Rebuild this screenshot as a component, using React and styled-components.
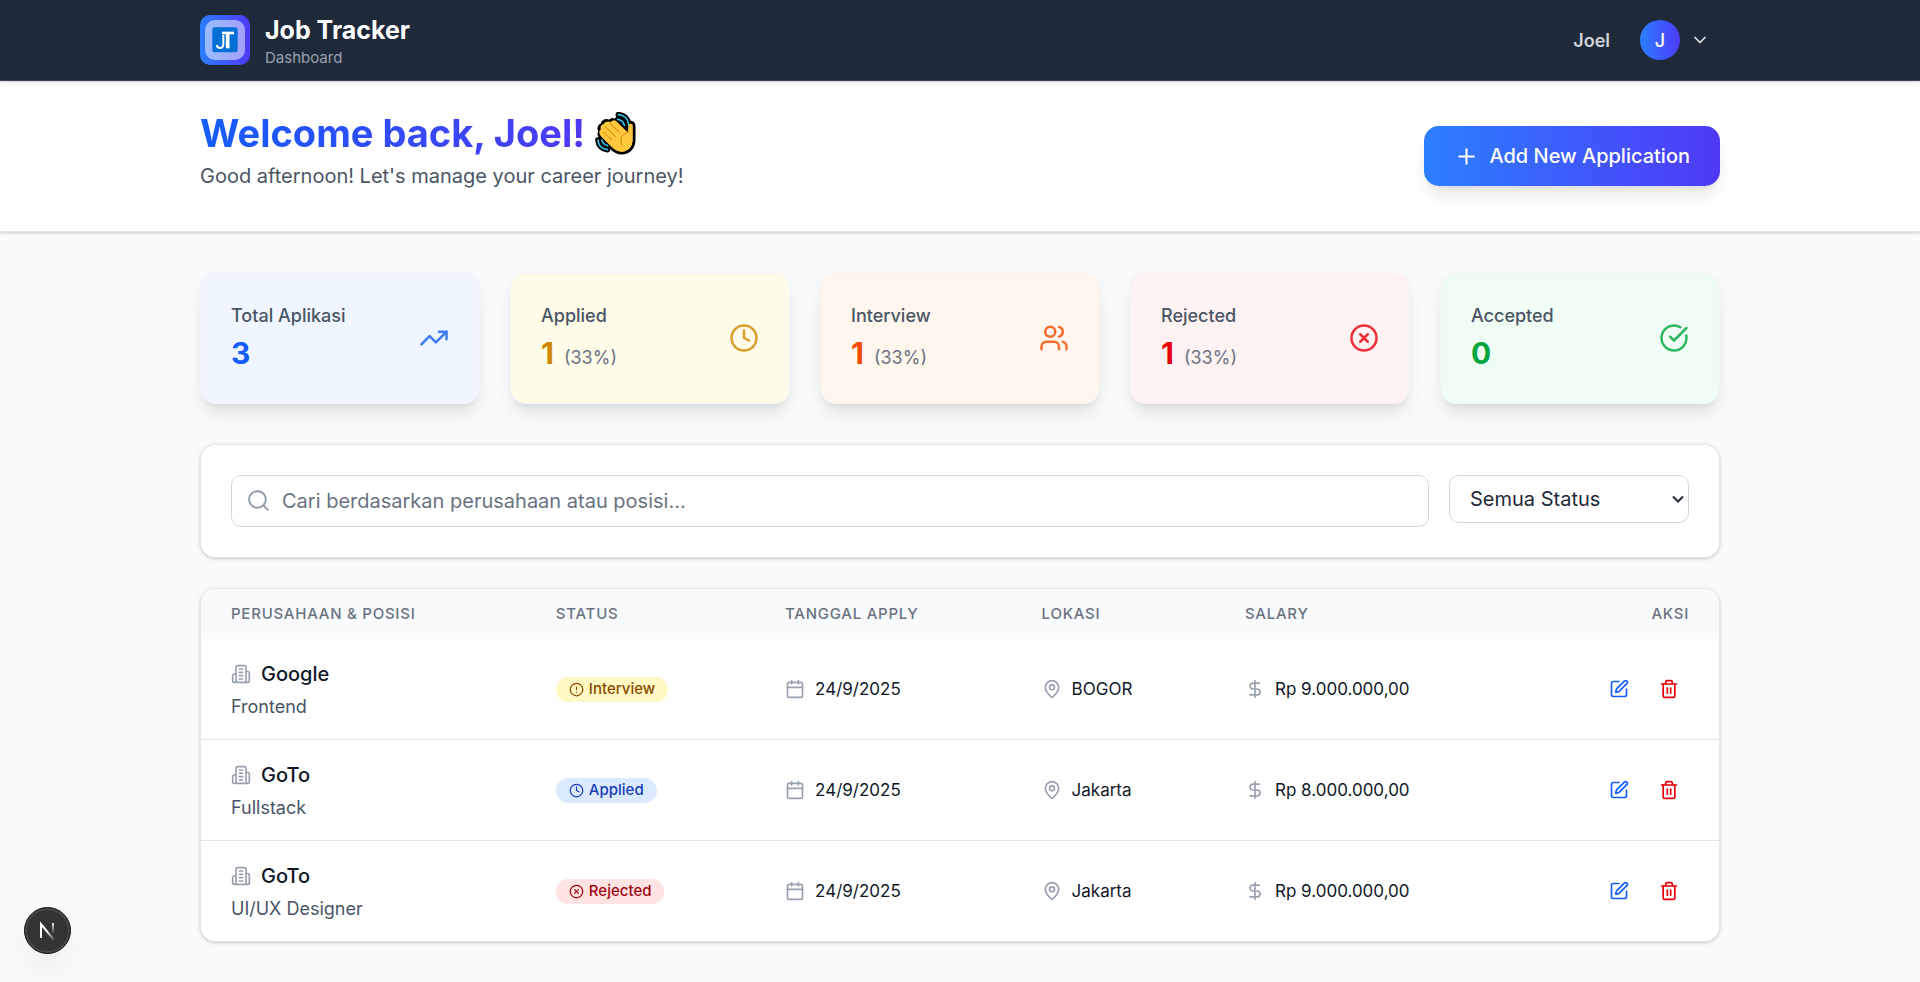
import React, { useState } from "react";
import styled, { createGlobalStyle } from "styled-components";
import {
  Calendar,
  ChevronDown,
  CircleAlert,
  CircleCheckBig,
  CircleX,
  Clock,
  DollarSign,
  MapPin,
  Plus,
  Search,
  SquarePen,
  Trash2,
  TrendingUp,
  Users,
} from "lucide-react";

const GlobalStyle = createGlobalStyle`
  *, *::before, *::after { box-sizing: border-box; }
  body {
    margin: 0;
    background: #f9fafb;
    color: #101828;
    font-family: Inter, "Liberation Sans", sans-serif;
    font-size: 20px;
    line-height: 30px;
  }
  h1, h2, p { margin: 0; }
  button, input, select { font: inherit; }
  button { cursor: pointer; }
  svg { flex-shrink: 0; display: block; }
`;

const Page = styled.div`
  min-height: 100vh;
`;

const Container = styled.div`
  width: 100%;
  max-width: 1600px;
  margin: 0 auto;
  padding: 0 40px;
`;

const Nav = styled.nav`
  position: relative;
  background: #1e2939;
  border-bottom: 1px solid #364153;
  box-shadow: 0 1px 4px rgba(0, 0, 0, 0.1), 0 1px 2px rgba(0, 0, 0, 0.1);
`;

const NavRow = styled(Container)`
  display: flex;
  align-items: center;
  justify-content: space-between;
  height: 80px;
`;

const Brand = styled.a`
  display: flex;
  align-items: center;
  gap: 15px;
  color: #ffffff;
  text-decoration: none;
`;

const LogoTile = styled.span`
  display: grid;
  place-items: center;
  width: 50px;
  height: 50px;
  border-radius: 10px;
  background: linear-gradient(90deg, #2b7fff, #4f39f6);
`;

const LogoInner = styled.span`
  display: grid;
  place-items: center;
  width: 40px;
  height: 40px;
  border-radius: 10px;
  background: rgba(255, 255, 255, 0.5);
`;

const BrandText = styled.span`
  display: flex;
  flex-direction: column;
`;

const BrandName = styled.span`
  font-size: 25px;
  font-weight: 700;
  line-height: 35px;
`;

const BrandSub = styled.span`
  color: #99a1af;
  font-size: 15px;
  line-height: 20px;
`;

const UserArea = styled.div`
  display: flex;
  align-items: center;
  gap: 20px;
`;

const UserName = styled.span`
  color: #d1d5dc;
  font-size: 18px;
  font-weight: 600;
  line-height: 25px;
`;

const UserMenuButton = styled.button`
  display: flex;
  align-items: center;
  gap: 10px;
  padding: 10px;
  border: 0;
  background: none;
  color: #e5e7eb;
`;

const Avatar = styled.span`
  display: grid;
  place-items: center;
  width: 40px;
  height: 40px;
  border-radius: 50%;
  background: linear-gradient(90deg, #2b7fff, #4f39f6);
  color: #ffffff;
  font-size: 18px;
  font-weight: 500;
  line-height: 25px;
`;

const Hero = styled.header`
  background: #ffffff;
  border-bottom: 1px solid #e5e7eb;
  box-shadow: 0 1px 4px rgba(0, 0, 0, 0.1), 0 1px 2px rgba(0, 0, 0, 0.1);
`;

const HeroRow = styled(Container)`
  display: flex;
  align-items: center;
  justify-content: space-between;
  padding-top: 30px;
  padding-bottom: 30px;
`;

const HeroText = styled.div`
  padding-bottom: 10px;
`;

const Title = styled.h1`
  display: flex;
  align-items: center;
  gap: 10px;
  font-size: 38px;
  font-weight: 700;
  line-height: 45px;
`;

const GradientText = styled.span`
  background: linear-gradient(90deg, #155dfc, #4f39f6);
  background-clip: text;
  color: transparent;
`;

const Greeting = styled.p`
  margin-top: 5px;
  color: #4a5565;
`;

const AddButton = styled.button`
  display: flex;
  align-items: center;
  gap: 10px;
  padding: 15px 30px;
  border: 0;
  border-radius: 15px;
  background: linear-gradient(90deg, #2b7fff, #4f39f6);
  box-shadow: 0 12px 19px -4px rgba(0, 0, 0, 0.1), 0 5px 8px -5px rgba(0, 0, 0, 0.1);
  color: #ffffff;
  font-weight: 500;
`;

const Main = styled.main`
  padding: 40px 0;
`;

const StatGrid = styled.section`
  display: grid;
  grid-template-columns: repeat(5, 1fr);
  gap: 30px;
  margin-bottom: 40px;
`;

const StatCard = styled.article`
  display: flex;
  align-items: center;
  justify-content: space-between;
  padding: 30px;
  border: 1px solid #f3f4f6;
  border-radius: 15px;
  background: ${(p) => p.$bg};
  color: ${(p) => p.$color};
  box-shadow: 0 12px 19px -4px rgba(0, 0, 0, 0.1), 0 5px 8px -5px rgba(0, 0, 0, 0.1);

  > svg { opacity: 0.8; }
`;

const StatLabel = styled.h2`
  color: #4a5565;
  font-size: 18px;
  font-weight: 500;
  line-height: 25px;
`;

const StatFigures = styled.p`
  display: flex;
  align-items: baseline;
  gap: 10px;
  margin-top: 5px;
`;

const StatValue = styled.span`
  font-size: 30px;
  font-weight: 700;
  line-height: 40px;
`;

const StatShare = styled.span`
  color: #6a7282;
  font-size: 18px;
  line-height: 25px;
`;

const Card = styled.section`
  border: 1px solid #e5e7eb;
  border-radius: 15px;
  background: #ffffff;
  box-shadow: 0 1px 4px rgba(0, 0, 0, 0.1), 0 1px 2px rgba(0, 0, 0, 0.1);
`;

const FilterCard = styled(Card)`
  display: flex;
  align-items: flex-start;
  gap: 20px;
  margin-bottom: 30px;
  padding: 30px;
`;

const SearchField = styled.label`
  position: relative;
  flex: 1;

  > svg {
    position: absolute;
    top: 13px;
    left: 15px;
    color: #99a1af;
  }
`;

const SearchInput = styled.input`
  display: block;
  width: 100%;
  height: 52px;
  padding: 0 20px 0 50px;
  border: 1px solid #d1d5dc;
  border-radius: 10px;
  background: #ffffff;
  color: #1e2939;

  &::placeholder { color: #6a7282; opacity: 1; }
`;

const StatusField = styled.label`
  position: relative;
  width: 240px;

  > svg {
    position: absolute;
    top: 20px;
    right: 5px;
    pointer-events: none;
  }
`;

const StatusSelect = styled.select`
  display: block;
  width: 100%;
  height: 48px;
  padding: 0 20px;
  appearance: none;
  border: 1px solid #d1d5dc;
  border-radius: 10px;
  background: #ffffff;
  color: #1e2939;
`;

const TableCard = styled(Card)`
  overflow: hidden;
`;

const Table = styled.table`
  width: 100%;
  table-layout: fixed;
  border-collapse: separate;
  border-spacing: 0;
`;

const Col = styled.col`
  width: ${(p) => p.$share};
`;

const HeadCell = styled.th`
  padding: 15px 30px;
  background: #f9fafb;
  color: #6a7282;
  font-size: 15px;
  font-weight: 500;
  letter-spacing: 0.05em;
  line-height: 20px;
  text-align: ${(p) => (p.$end ? "right" : "left")};
  text-transform: uppercase;
  white-space: nowrap;
`;

const Cell = styled.td`
  padding: 20px 30px;
  font-size: 17px;
  line-height: 25px;
  vertical-align: middle;
  white-space: nowrap;
`;

const Row = styled.tr`
  & + & > ${Cell} { border-top: 1px solid #e5e7eb; }
`;

const Company = styled.div`
  display: flex;
  align-items: center;
  gap: 10px;
  font-size: 20px;
  font-weight: 500;
  line-height: 30px;

  > svg { color: #99a1af; }
`;

const Position = styled.div`
  margin-top: 5px;
  color: #4a5565;
  font-size: 18px;
`;

const Detail = styled.div`
  display: flex;
  align-items: center;
  gap: 10px;

  > svg { color: #99a1af; }
`;

const Badge = styled.span`
  display: flex;
  align-items: center;
  gap: 5px;
  width: fit-content;
  height: 25px;
  padding: 0 13px;
  border-radius: 13px;
  background: ${(p) => p.$bg};
  color: ${(p) => p.$color};
  font-size: 15px;
  font-weight: 500;
  line-height: 20px;
`;

const Actions = styled.div`
  display: flex;
  justify-content: flex-end;
  gap: 10px;
`;

const IconButton = styled.button`
  padding: 10px;
  border: 0;
  border-radius: 10px;
  background: none;
  color: ${(p) => p.$color};
`;

const DevBadge = styled.button`
  position: fixed;
  bottom: 28px;
  left: 24px;
  display: grid;
  place-items: center;
  width: 47px;
  height: 47px;
  padding: 0;
  border: 1px solid #111111;
  border-radius: 50%;
  background: #333333;
  box-shadow: inset 0 0 0 2px #484848, 0 16px 32px -8px rgba(0, 0, 0, 0.1);
`;

function LogoMark() {
  return (
    <svg width="26" height="26" viewBox="0 0 78 78" fill="none" aria-hidden="true">
      <rect x="1" y="1" width="76" height="75" rx="8" fill="#006fd6" />
      <path d="M34 24V52Q34 63 24 63Q16 63 14 54" stroke="#fff" strokeWidth="6" />
      <path d="M30 18H66" stroke="#fff" strokeWidth="8" />
      <path d="M47 18V64" stroke="#fff" strokeWidth="11" />
    </svg>
  );
}

function WavingHand() {
  return (
    <svg width="42" height="43" viewBox="0 0 126 129" fill="none" role="img" aria-label="Waving hand">
      <g strokeLinecap="round" strokeLinejoin="round">
        <path d="M70 8C88 9 99 21 101 37M68 22C78 23 85 29 88 40" stroke="#000" strokeWidth="17" />
        <path d="M9 84C10 100 20 111 37 113M21 84C22 92 28 98 38 101" stroke="#000" strokeWidth="17" />
        <path
          d="M96 55V42C96 27 117 27 117 42V83C117 108 101 123 80 123C65 123 56 116 46 106L18 78C8 67 12 60 16 58C8 49 13 38 22 39C22 27 33 22 42 29C49 20 59 22 65 28L95 57"
          fill="#ffc83d"
          stroke="#000"
          strokeWidth="9"
        />
        <path
          d="M94 57L64 28C58 22 50 25 49 32C40 25 31 28 30 37C19 35 14 43 20 52C10 54 12 66 18 73L48 103C58 113 67 119 80 119C98 119 113 106 113 82V42C113 33 100 33 100 42V60Z"
          fill="#ffc83d"
        />
        <path d="M46 34L74 62M31 44L62 74M25 60L50 84" stroke="#d67d00" strokeWidth="3" />
        <path d="M101 60C82 66 73 78 80 99" stroke="#d67d00" strokeWidth="3" />
        <path d="M70 8C88 9 99 21 101 37M68 22C78 23 85 29 88 40" stroke="#31c8f0" strokeWidth="5" />
        <path d="M9 84C10 100 20 111 37 113M21 84C22 92 28 98 38 101" stroke="#31c8f0" strokeWidth="5" />
      </g>
    </svg>
  );
}

function BuildingIcon() {
  return (
    <svg
      width="20"
      height="20"
      viewBox="0 0 24 24"
      fill="none"
      stroke="currentColor"
      strokeWidth="2"
      strokeLinecap="round"
      strokeLinejoin="round"
      aria-hidden="true"
    >
      <path d="M6 22V4a2 2 0 0 1 2-2h8a2 2 0 0 1 2 2v18Z" />
      <path d="M6 12H4a2 2 0 0 0-2 2v6a2 2 0 0 0 2 2h2" />
      <path d="M18 9h2a2 2 0 0 1 2 2v9a2 2 0 0 1-2 2h-2" />
      <path d="M10 6h4M10 10h4M10 14h4M10 18h4" />
    </svg>
  );
}

function SelectArrow() {
  return (
    <svg width="12" height="8" viewBox="0 0 12 8" fill="none" aria-hidden="true">
      <path d="M1 1.5L6 6.5L11 1.5" stroke="#1e2939" strokeWidth="2" />
    </svg>
  );
}

function DevMark() {
  return (
    <svg width="19" height="21" viewBox="0 0 19 21" fill="none" aria-hidden="true">
      <defs>
        <linearGradient id="stem" x1="0" y1="2" x2="0" y2="14" gradientUnits="userSpaceOnUse">
          <stop stopColor="#fff" />
          <stop offset="1" stopColor="#fff" stopOpacity="0" />
        </linearGradient>
        <linearGradient id="diagonal" x1="9" y1="10" x2="17" y2="20" gradientUnits="userSpaceOnUse">
          <stop stopColor="#fff" />
          <stop offset="1" stopColor="#fff" stopOpacity="0.1" />
        </linearGradient>
      </defs>
      <path d="M3 18V4L16 20" stroke="url(#diagonal)" strokeWidth="2" />
      <path d="M15 3V15" stroke="url(#stem)" strokeWidth="2" />
    </svg>
  );
}

const stats = [
  { label: "Total Aplikasi", value: 3, icon: TrendingUp, bg: "#eff6ff", color: "#155dfc" },
  { label: "Applied", value: 1, share: "(33%)", icon: Clock, bg: "#fefce8", color: "#d08700" },
  { label: "Interview", value: 1, share: "(33%)", icon: Users, bg: "#fff7ed", color: "#f54900" },
  { label: "Rejected", value: 1, share: "(33%)", icon: CircleX, bg: "#fef2f2", color: "#e7000b" },
  { label: "Accepted", value: 0, icon: CircleCheckBig, bg: "#f0fdf4", color: "#00a63e" },
];

const statuses = {
  Interview: { icon: CircleAlert, bg: "#fef9c2", color: "#894b00" },
  Applied: { icon: Clock, bg: "#dbeafe", color: "#193cb8" },
  Rejected: { icon: CircleX, bg: "#ffe2e2", color: "#9f0712" },
};

const applications = [
  { id: 1, company: "Google", position: "Frontend", status: "Interview", date: "24/9/2025", place: "BOGOR", salary: "Rp 9.000.000,00" },
  { id: 2, company: "GoTo", position: "Fullstack", status: "Applied", date: "24/9/2025", place: "Jakarta", salary: "Rp 8.000.000,00" },
  { id: 3, company: "GoTo", position: "UI/UX Designer", status: "Rejected", date: "24/9/2025", place: "Jakarta", salary: "Rp 9.000.000,00" },
];

function StatusBadge({ status }) {
  const { icon: Icon, bg, color } = statuses[status];
  return (
    <Badge $bg={bg} $color={color}>
      <Icon size={15} />
      {status}
    </Badge>
  );
}

export default function App() {
  const [query, setQuery] = useState("");
  const [status, setStatus] = useState("");
  const rows = applications.filter(
    (a) =>
      (!status || a.status === status) &&
      `${a.company} ${a.position}`.toLowerCase().includes(query.toLowerCase())
  );

  return (
    <Page>
      <GlobalStyle />
      <Nav>
        <NavRow>
          <Brand href="#dashboard">
            <LogoTile>
              <LogoInner>
                <LogoMark />
              </LogoInner>
            </LogoTile>
            <BrandText>
              <BrandName>Job Tracker</BrandName>
              <BrandSub>Dashboard</BrandSub>
            </BrandText>
          </Brand>
          <UserArea>
            <UserName>Joel</UserName>
            <UserMenuButton type="button" aria-label="Account menu">
              <Avatar>J</Avatar>
              <ChevronDown size={20} />
            </UserMenuButton>
          </UserArea>
        </NavRow>
      </Nav>

      <Hero>
        <HeroRow>
          <HeroText>
            <Title>
              <GradientText>Welcome back, Joel!</GradientText>
              <WavingHand />
            </Title>
            <Greeting>Good afternoon! Let's manage your career journey!</Greeting>
          </HeroText>
          <AddButton type="button">
            <Plus size={25} />
            Add New Application
          </AddButton>
        </HeroRow>
      </Hero>

      <Main>
        <Container>
          <StatGrid>
            {stats.map(({ label, value, share, icon: Icon, bg, color }) => (
              <StatCard key={label} $bg={bg} $color={color}>
                <div>
                  <StatLabel>{label}</StatLabel>
                  <StatFigures>
                    <StatValue>{value}</StatValue>
                    {share && <StatShare>{share}</StatShare>}
                  </StatFigures>
                </div>
                <Icon size={30} />
              </StatCard>
            ))}
          </StatGrid>

          <FilterCard>
            <SearchField>
              <Search size={25} />
              <SearchInput
                type="text"
                aria-label="Cari lamaran"
                placeholder="Cari berdasarkan perusahaan atau posisi..."
                value={query}
                onChange={(e) => setQuery(e.target.value)}
              />
            </SearchField>
            <StatusField>
              <StatusSelect aria-label="Status" value={status} onChange={(e) => setStatus(e.target.value)}>
                <option value="">Semua Status</option>
                <option value="Applied">Applied</option>
                <option value="Interview">Interview</option>
                <option value="Rejected">Rejected</option>
              </StatusSelect>
              <SelectArrow />
            </StatusField>
          </FilterCard>

          <TableCard>
            <Table>
              <colgroup>
                <Col $share="21.4%" />
                <Col $share="15.1%" />
                <Col $share="16.9%" />
                <Col $share="13.4%" />
                <Col $share="18%" />
                <Col />
              </colgroup>
              <thead>
                <tr>
                  <HeadCell scope="col">Perusahaan &amp; Posisi</HeadCell>
                  <HeadCell scope="col">Status</HeadCell>
                  <HeadCell scope="col">Tanggal Apply</HeadCell>
                  <HeadCell scope="col">Lokasi</HeadCell>
                  <HeadCell scope="col">Salary</HeadCell>
                  <HeadCell scope="col" $end>Aksi</HeadCell>
                </tr>
              </thead>
              <tbody>
                {rows.map((a) => (
                  <Row key={a.id}>
                    <Cell>
                      <Company>
                        <BuildingIcon />
                        {a.company}
                      </Company>
                      <Position>{a.position}</Position>
                    </Cell>
                    <Cell>
                      <StatusBadge status={a.status} />
                    </Cell>
                    <Cell>
                      <Detail>
                        <Calendar size={20} />
                        {a.date}
                      </Detail>
                    </Cell>
                    <Cell>
                      <Detail>
                        <MapPin size={20} />
                        {a.place}
                      </Detail>
                    </Cell>
                    <Cell>
                      <Detail>
                        <DollarSign size={20} />
                        {a.salary}
                      </Detail>
                    </Cell>
                    <Cell>
                      <Actions>
                        <IconButton type="button" $color="#155dfc" aria-label="Edit">
                          <SquarePen size={20} />
                        </IconButton>
                        <IconButton type="button" $color="#e7000b" aria-label="Hapus">
                          <Trash2 size={20} />
                        </IconButton>
                      </Actions>
                    </Cell>
                  </Row>
                ))}
              </tbody>
            </Table>
          </TableCard>
        </Container>
      </Main>

      <DevBadge type="button" aria-label="Developer tools">
        <DevMark />
      </DevBadge>
    </Page>
  );
}
